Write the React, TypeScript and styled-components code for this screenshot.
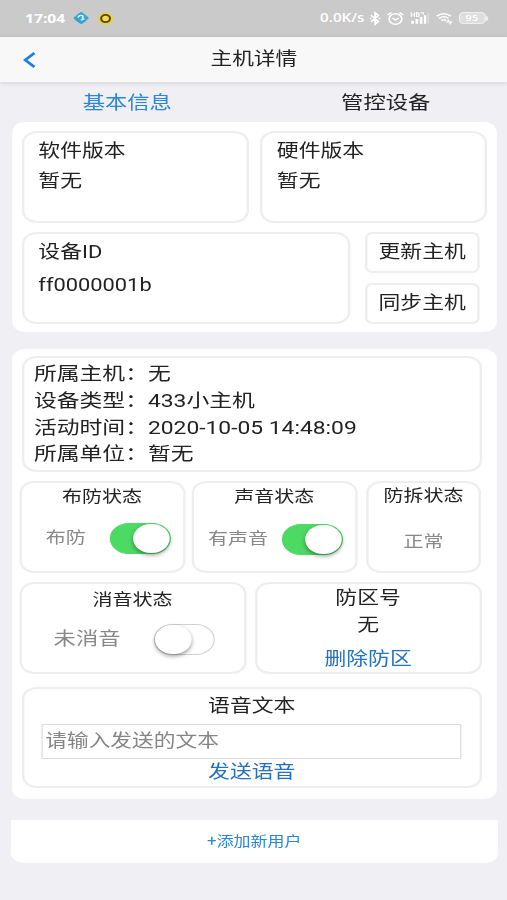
import React, { useState } from "react";
import styled, { createGlobalStyle } from "styled-components";

const GlobalStyle = createGlobalStyle`
  * { box-sizing: border-box; }
  body {
    margin: 0;
    background: #efeff4;
    font-family: Roboto, "Noto Sans CJK SC", sans-serif;
    color: #222;
  }
`;

const Viewport = styled.div`
  width: 507px;
  height: 900px;
  overflow: hidden;
`;

/* The phone layout is 416px wide and widened to fill the window. */
const Screen = styled.div`
  width: 416px;
  height: 900px;
  transform: scaleX(1.2206);
  transform-origin: 0 0;
  background: #efeff4;
  display: flex;
  flex-direction: column;
`;

const StatusBar = styled.div`
  height: 37px;
  flex: none;
  background: #cacaca;
  color: #fff;
  display: flex;
  align-items: center;
  justify-content: space-between;
  padding: 0 16.4px 1px 20.5px;
  font: 700 12.8px/20px "Open Sans", sans-serif;
`;

const StatusGroup = styled.div<{ $gap: number }>`
  display: flex;
  align-items: center;
  gap: ${(p) => p.$gap}px;
  svg { display: block; }
`;

const Speed = styled.span`
  font-size: 12.4px;
  font-weight: 600;
  margin-right: -1px;
`;

const Header = styled.header`
  height: 45px;
  flex: none;
  background: #f8f8f8;
  box-shadow: 0 1px 5px rgba(0, 0, 0, 0.13);
  display: grid;
  grid-template-columns: 60px 1fr 60px;
  align-items: center;
  position: relative;
`;

const BackButton = styled.button`
  border: 0;
  background: none;
  padding: 0 0 0 18px;
  display: flex;
`;

const Title = styled.h1`
  margin: 0;
  padding-bottom: 1px;
  font-size: 17.8px;
  font-weight: 400;
  line-height: 26px;
  text-align: center;
`;

const Tabs = styled.nav`
  display: flex;
  height: 40px;
  flex: none;
`;

const Tab = styled.a<{ $active?: boolean }>`
  width: ${(p) => (p.$active ? 208.6 : 214.8)}px;
  flex: none;
  text-align: center;
  font-size: 18.3px;
  line-height: 41px;
  color: ${(p) => (p.$active ? "#2b86d9" : "#222")};
`;

const Card = styled.section<{ $height: number; $bottom: number }>`
  height: ${(p) => p.$height}px;
  flex: none;
  margin: 0 8.8px ${(p) => p.$bottom}px 9.6px;
  background: #fff;
  border-radius: 10px;
  padding: 9px 0 0 8.2px;
`;

const Row = styled.div<{ $gap: number; $mt?: number; $shift?: number }>`
  display: flex;
  gap: ${(p) => p.$gap}px;
  margin-top: ${(p) => p.$mt ?? 0}px;
  margin-left: ${(p) => p.$shift ?? 0}px;
`;

const Box = styled.div<{ $w: number; $h?: number }>`
  width: ${(p) => p.$w}px;
  height: ${(p) => p.$h ?? 92}px;
  flex: none;
  border: 2px solid #eceeef;
  border-radius: 12px;
`;

const VersionBox = styled(Box)`
  padding: 3px 0 0 11.6px;
  font-size: 17.9px;
  line-height: 29.5px;
`;

const DeviceBox = styled(VersionBox)`
  padding-top: 1px;
  line-height: 33px;
`;

const ButtonStack = styled.div`
  display: flex;
  flex-direction: column;
  gap: 10px;
`;

const HostButton = styled.button`
  width: 93.4px;
  height: 41px;
  padding: 0 0 1px;
  border: 2px solid #eceeef;
  border-radius: 6px;
  background: #fff;
  color: #222;
  font: 17.9px/30px Roboto, "Noto Sans CJK SC", sans-serif;
`;

const InfoBox = styled(Box)`
  padding: 3px 0 0 8px;
  font-size: 18.7px;
  line-height: 26.8px;
`;

const InfoLine = styled.div`
  height: 26.8px;
  white-space: nowrap;
`;

const StateBox = styled(Box)`
  display: flex;
  flex-direction: column;
  align-items: center;
`;

const StateTitle = styled.div<{ $lh?: number }>`
  height: 25px;
  font-size: 16.4px;
  line-height: ${(p) => p.$lh ?? 28}px;
`;

const StateBody = styled.div<{ $gap?: number; $size?: number; $mt: number; $left?: number }>`
  height: 36px;
  margin-top: ${(p) => p.$mt}px;
  align-self: stretch;
  padding-left: ${(p) => p.$left ?? 0}px;
  display: flex;
  align-items: center;
  justify-content: ${(p) => (p.$left ? "flex-start" : "center")};
  gap: ${(p) => p.$gap ?? 0}px;
  font-size: ${(p) => p.$size ?? 16.4}px;
  color: #888;
`;

const StateLabel = styled.span`
  line-height: 30px;
`;

const Track = styled.button<{ $on: boolean }>`
  width: 50px;
  height: 31px;
  flex: none;
  padding: 0;
  display: flex;
  justify-content: ${(p) => (p.$on ? "flex-end" : "flex-start")};
  align-items: center;
  border: 1px solid ${(p) => (p.$on ? "#4cd964" : "#d2d2d2")};
  border-radius: 16px;
  background: ${(p) => (p.$on ? "#4cd964" : "#fff")};
`;

const Thumb = styled.span`
  width: 30px;
  height: 29px;
  border-radius: 15px;
  background: #fff;
  box-shadow: 0 2px 4px rgba(0, 0, 0, 0.4);
`;

const ZoneBox = styled(Box)`
  text-align: center;
  font-size: 17.9px;
  line-height: 27px;
`;

const ActionLink = styled.a<{ $lh: number }>`
  display: block;
  text-align: center;
  color: #2472bd;
  line-height: ${(p) => p.$lh}px;
`;

const VoiceBox = styled(Box)`
  padding: 2px 14.3px 0;
  font-size: 17.9px;
`;

const VoiceTitle = styled.div`
  height: 33px;
  text-align: center;
  line-height: 30px;
`;

const VoiceInput = styled.input`
  display: block;
  width: 344.3px;
  height: 35px;
  padding: 0 2px 3px;
  border: 1px solid #dcdcdc;
  border-radius: 0;
  background: #fff;
  font: 17.8px Roboto, "Noto Sans CJK SC", sans-serif;
  &::placeholder { color: #858585; }
`;

const AddUser = styled.button`
  height: 43px;
  flex: none;
  margin: 0 8.4px 0 9px;
  padding: 0 0 3px;
  border: 0;
  border-radius: 0 0 10px 10px;
  background: #fff;
  color: #2b86d9;
  font: 13.9px Roboto, "Noto Sans CJK SC", sans-serif;
`;

function Toggle({ initial }: { initial: boolean }) {
  const [on, setOn] = useState(initial);
  return (
    <Track $on={on} role="switch" aria-checked={on} onClick={() => setOn(!on)}>
      <Thumb />
    </Track>
  );
}

const CloudIcon = () => (
  <svg width="13" height="14" viewBox="0 0 13 14">
    <path d="M6.5 .7Q10.5 4 12.8 7 10 11 6.5 13.3 2 10.5.2 7 3 3.5 6.5.7Z" fill="#35a5d0" />
    <path d="M3.8 6.4Q5 3.6 7.4 4.6 8.8 5.6 7 7.4M6.2 9.2l3-1.6" fill="none" stroke="#e4f6fb" strokeWidth="1.3" />
  </svg>
);

const RingIcon = () => (
  <svg width="13" height="13" viewBox="0 0 13 13">
    <circle cx="6.5" cy="6.5" r="6.2" fill="#ead044" />
    <circle cx="6.5" cy="6.5" r="3.6" fill="#f3d94d" stroke="#51471f" strokeWidth="1.7" />
  </svg>
);

const BluetoothIcon = () => (
  <svg width="9" height="15" viewBox="0 0 9 15" fill="none" stroke="#fff" strokeWidth="1.4">
    <path d="M1 4.3 7 10.4 4.3 13.2V1.8L7 4.5 1 10.7M.2 7.5h1.1M7.2 7.5h1.4" />
  </svg>
);

const AlarmIcon = () => (
  <svg width="14" height="15" viewBox="0 0 14 15" fill="none" stroke="#fff" strokeWidth="1.4">
    <circle cx="7" cy="8" r="5.2" />
    <path d="M.6 4 3.7 1.5M13.4 4l-3.1-2.5M4.6 7 7 9l2.6-2" />
  </svg>
);

const SignalIcon = () => (
  <svg width="16" height="14" viewBox="0 0 17 14" fill="#fff">
    <path d="M1 10h2.3v3H1zM4.7 8H7v5H4.7zM8.4 6h2.3v7H8.4zM12 4h2v9h-2z" />
    <path d="M15.2 2h1.5v11h-1.5z" opacity=".35" />
    <path d="M1 1v5M3.8 1v5M1 3.5h2.8M5.6 1.5v4H7q1.8-2 0-4ZM9 1.5h2.4v2" fill="none" stroke="#fff" strokeWidth="1" />
  </svg>
);

const WifiIcon = () => (
  <svg width="14" height="14" viewBox="0 0 14 14" fill="none" stroke="#fff" strokeWidth="1.5">
    <path d="M.8 5.1Q6.5.3 12.4 5.1M2.7 7.4q3.8-3.2 7.7 0M4.6 9.6q2-1.5 3.9 0" />
    <path d="M10.9 8.6 9.4 10.8H12.8L11.4 13.4" strokeWidth="1.2" />
  </svg>
);

const Battery = styled.span`
  width: 22px;
  height: 12px;
  border: 1px solid #f0f0f0;
  border-radius: 4px;
  background: #dedede;
  font: 600 9px/10px "Open Sans", sans-serif;
  text-align: center;
`;

const BatteryTip = styled.span`
  width: 2px;
  height: 5px;
  border-radius: 0 2px 2px 0;
  background: #f0f0f0;
`;

const BatteryWrap = styled.span`
  display: flex;
  align-items: center;
`;

const info = ["所属主机：无", "设备类型：433小主机", "活动时间：2020-10-05 14:48:09", "所属单位：暂无"];

export default function App() {
  return (
    <Viewport>
      <GlobalStyle />
      <Screen>
        <StatusBar>
          <StatusGroup $gap={6.6}>
            <span>17:04</span>
            <CloudIcon />
            <RingIcon />
          </StatusGroup>
          <StatusGroup $gap={5}>
            <Speed>0.0K/s</Speed>
            <BluetoothIcon />
            <AlarmIcon />
            <SignalIcon />
            <WifiIcon />
            <BatteryWrap>
              <Battery>95</Battery>
              <BatteryTip />
            </BatteryWrap>
          </StatusGroup>
        </StatusBar>
        <Header>
          <BackButton aria-label="返回">
            <svg width="12" height="18" viewBox="0 0 12 18" fill="none" stroke="#1c80e8" strokeWidth="2.4">
              <path d="M10.2 2 2.6 9l7.6 7" />
            </svg>
          </BackButton>
          <Title>主机详情</Title>
        </Header>
        <Tabs>
          <Tab $active>基本信息</Tab>
          <Tab>管控设备</Tab>
        </Tabs>

        <Card $height={210} $bottom={17}>
          <Row $gap={9.4}>
            <VersionBox $w={186}>
              <div>软件版本</div>
              <div>暂无</div>
            </VersionBox>
            <VersionBox $w={186}>
              <div>硬件版本</div>
              <div>暂无</div>
            </VersionBox>
          </Row>
          <Row $gap={12.2} $mt={9}>
            <DeviceBox $w={269.2}>
              <div>设备ID</div>
              <div>ff0000001b</div>
            </DeviceBox>
            <ButtonStack>
              <HostButton>更新主机</HostButton>
              <HostButton>同步主机</HostButton>
            </ButtonStack>
          </Row>
        </Card>

        <Card $height={450} $bottom={21}>
          <Row $gap={0} $mt={-2}>
            <InfoBox $w={377} $h={116}>
              {info.map((line) => (
                <InfoLine key={line}>{line}</InfoLine>
              ))}
            </InfoBox>
          </Row>
          <Row $gap={5} $mt={9} $shift={-2.2}>
            <StateBox $w={136}>
              <StateTitle>布防状态</StateTitle>
              <StateBody $mt={12} $left={19.8} $gap={20}>
                <StateLabel>布防</StateLabel>
                <Toggle initial={true} />
              </StateBody>
            </StateBox>
            <StateBox $w={136}>
              <StateTitle>声音状态</StateTitle>
              <StateBody $mt={13} $left={11.9} $gap={11.6}>
                <StateLabel>有声音</StateLabel>
                <Toggle initial={true} />
              </StateBody>
            </StateBox>
            <Row $gap={0} $shift={2.2}>
              <StateBox $w={94.5}>
                <StateTitle $lh={26}>防拆状态</StateTitle>
                <StateBody $mt={16}>
                  <StateLabel>正常</StateLabel>
                </StateBody>
              </StateBox>
            </Row>
          </Row>
          <Row $gap={7} $mt={9} $shift={-2.2}>
            <StateBox $w={186}>
              <StateTitle $lh={31}>消音状态</StateTitle>
              <StateBody $mt={12} $left={26.3} $gap={27.4} $size={18.3}>
                <StateLabel>未消音</StateLabel>
                <Toggle initial={false} />
              </StateBody>
            </StateBox>
            <ZoneBox $w={186}>
              <div>防区号</div>
              <div>无</div>
              <ActionLink $lh={41}>删除防区</ActionLink>
            </ZoneBox>
          </Row>
          <Row $gap={0} $mt={13}>
            <VoiceBox $w={377} $h={101}>
              <VoiceTitle>语音文本</VoiceTitle>
              <VoiceInput placeholder="请输入发送的文本" />
              <ActionLink $lh={25}>发送语音</ActionLink>
            </VoiceBox>
          </Row>
        </Card>

        <AddUser>+添加新用户</AddUser>
      </Screen>
    </Viewport>
  );
}
